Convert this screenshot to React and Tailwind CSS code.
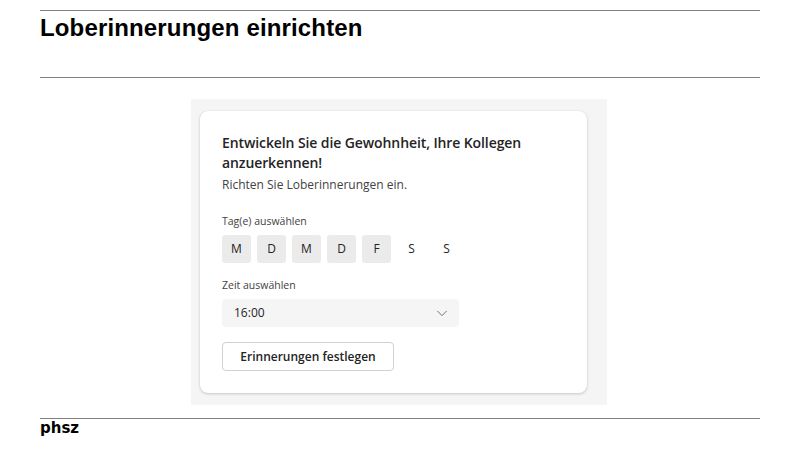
const DAYS = [
  { label: "M", on: true },
  { label: "D", on: true },
  { label: "M", on: true },
  { label: "D", on: true },
  { label: "F", on: true },
  { label: "S", on: false },
  { label: "S", on: false },
];

const UI_FONT = "font-['Open_Sans',sans-serif]";

export default function App() {
  return (
    <div className="min-h-[450px] bg-white px-10 pt-[10px]">
      <div className="border-t border-[#808080]" />
      <h1 className="mt-[3px] mb-[35px] font-['Liberation_Sans',Arial,sans-serif] text-[24px] font-bold leading-[28px] tracking-[0.15px] text-black">
        Loberinnerungen einrichten
      </h1>
      <div className="border-t border-[#808080]" />

      {/* embedded Teams-style card */}
      <div className={`mt-[21px] ml-[151px] h-[306px] w-[416px] bg-[#f5f5f5] pt-[12px] pl-[9px] ${UI_FONT}`}>
        <div className="h-[282px] w-[387px] rounded-[8px] bg-white px-[22px] pt-[22px] shadow-[0_1px_3px_rgba(0,0,0,0.18),0_0_1px_rgba(0,0,0,0.12)]">
          <h2 className="text-[14px] leading-[20px] font-semibold tracking-[-0.1px] text-[#242424]">
            Entwickeln Sie die Gewohnheit, Ihre Kollegen anzuerkennen!
          </h2>
          <p className="mt-[3px] text-[12px] leading-[18px] text-[#424242]">
            Richten Sie Loberinnerungen ein.
          </p>

          <p className="mt-[20px] text-[10.5px] leading-[14px] text-[#424242]">Tag(e) auswählen</p>
          <div className="mt-[7px] flex gap-[6px]">
            {DAYS.map((d, i) => (
              <div
                key={i}
                className={`flex h-[28px] w-[29px] items-center justify-center rounded-[3px] text-[12px] text-[#242424] ${
                  d.on ? "bg-[#ebebeb]" : ""
                }`}
              >
                {d.label}
              </div>
            ))}
          </div>

          <p className="mt-[15px] text-[10.5px] leading-[14px] text-[#424242]">Zeit auswählen</p>
          <div className="mt-[7px] flex h-[28px] w-[237px] items-center justify-between rounded-[4px] bg-[#f5f5f5] pl-[12px] pr-[10px] text-[12px] text-[#242424]">
            <span>16:00</span>
            <svg width="14" height="14" viewBox="0 0 16 16" fill="none">
              <path d="M3 6l5 5 5-5" stroke="#616161" strokeWidth="1" strokeLinecap="round" strokeLinejoin="round" />
            </svg>
          </div>

          <button className="mt-[15px] flex h-[29px] w-[172px] items-center justify-center rounded-[4px] border border-[#d1d1d1] bg-white text-[12px] font-semibold text-[#242424]">
            Erinnerungen festlegen
          </button>
        </div>
      </div>

      <div className="mt-[13px] border-t border-[#808080]" />
      <p className="font-['DejaVu_Sans',sans-serif] text-[15px] leading-[18px] font-bold text-black">
        phsz
      </p>
    </div>
  );
}
